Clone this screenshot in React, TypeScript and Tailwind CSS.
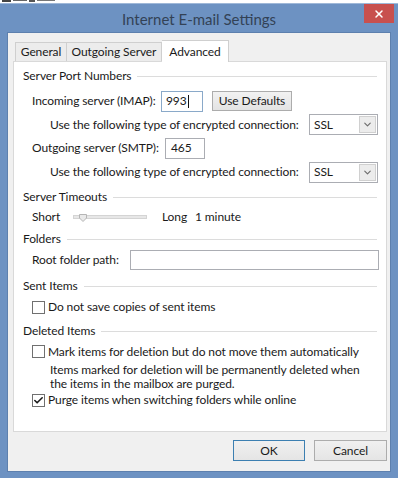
import { ChevronDown, X, Check } from "lucide-react";

function Section({ title, top }: { title: string; top: string }) {
  return (
    <div className={`flex h-[16px] items-center pl-[9px] pr-[9px] ${top}`}>
      <span className="whitespace-nowrap">{title}</span>
      <div className="ml-[6px] h-px flex-1 bg-[#dcdcdc]" />
    </div>
  );
}

function Select() {
  return (
    <div className="ml-auto flex h-[21px] w-[69px] items-center border border-[#abadb3] bg-white pl-[4px] pr-[1px]">
      <span className="flex-1">SSL</span>
      <div className="flex h-[17px] w-[17px] items-center justify-center border border-[#d0d0d0] bg-[#ececec]">
        <ChevronDown size={11} strokeWidth={2.5} className="text-[#6d6d6d]" />
      </div>
    </div>
  );
}

function CheckBox({ checked }: { checked?: boolean }) {
  return (
    <div className="flex h-[13px] w-[13px] items-center justify-center border border-[#707070] bg-white">
      {checked && <Check size={11} strokeWidth={3.5} className="text-[#1a1a1a]" />}
    </div>
  );
}

export default function App() {
  return (
    <div className="h-[478px] w-[398px] overflow-hidden bg-white font-['Lato',sans-serif] text-[12px] tracking-[-0.1px] text-[#1a1a1a]">
      {/* scraps of the window behind, cut by the edge */}
      <div className="flex h-[3px] items-start gap-[2px] pl-[2px]">
        <div className="h-[2px] w-[9px] bg-[#444]" />
        <div className="h-[1px] w-[14px] bg-[#666]" />
        <div className="h-[2px] w-[6px] bg-[#555]" />
        <div className="h-[1px] w-[18px] bg-[#777]" />
      </div>
      <div className="flex h-[475px] flex-col border-t border-[#9fb8d8] bg-[#6d92c2] px-[7px]">
        <div className="relative flex h-[28px] items-center justify-center">
          <span className="pt-[2px] text-[15px] tracking-normal text-[#334256]">Internet E-mail Settings</span>
          <div className="absolute -right-[3px] top-0 flex h-[19px] w-[30px] items-center justify-center bg-[#c8504e]">
            <X size={12} strokeWidth={3} className="text-white" />
          </div>
        </div>
        <div className="flex h-[440px] flex-col border border-[#5d80ae] bg-[#f0f0f0] pl-[5px] pr-[3px]">
          <div className="flex h-[28px] items-end pl-[2px]">
            <div className="flex h-[19px] w-[52px] items-center justify-center border border-b-0 border-[#cfcfcf] bg-[#ececec]">
              General
            </div>
            <div className="flex h-[19px] w-[95px] items-center justify-center border border-b-0 border-l-0 border-[#cfcfcf] bg-[#ececec]">
              Outgoing Server
            </div>
            <div className="relative z-10 -mb-px flex h-[22px] w-[67px] items-center justify-center border border-b-0 border-l-0 border-[#cfcfcf] bg-white">
              Advanced
            </div>
          </div>
          <div className="flex h-[371px] flex-col border border-[#d9d9d9] bg-white pt-[6px]">
            <Section title="Server Port Numbers" top="" />
            <div className="mt-[5px] flex h-[24px] items-center pl-[18px]">
              <span className="w-[129px]">Incoming server (IMAP):</span>
              <div className="flex h-[21px] w-[42px] items-center border border-[#8aa9c9] pl-[4px]">
                993<span className="ml-px h-[13px] w-px bg-[#111]" />
              </div>
              <div className="ml-[9px] flex h-[20px] w-[80px] items-center justify-center border border-[#acacac] bg-gradient-to-b from-[#f2f2f2] to-[#e3e3e3]">
                Use Defaults
              </div>
            </div>
            <div className="flex h-[23px] items-center pl-[36px] pr-[8px]">
              <span>Use the following type of encrypted connection:</span>
              <Select />
            </div>
            <div className="flex h-[24px] items-center pl-[18px]">
              <span className="w-[133px]">Outgoing server (SMTP):</span>
              <div className="flex h-[21px] w-[40px] items-center border border-[#abadb3] pl-[5px]">465</div>
            </div>
            <div className="flex h-[24px] items-center pl-[36px] pr-[8px]">
              <span>Use the following type of encrypted connection:</span>
              <Select />
            </div>
            <Section title="Server Timeouts" top="mt-[5px]" />
            <div className="flex h-[24px] items-center pl-[18px]">
              <span className="w-[41px]">Short</span>
              <div className="relative h-[4px] w-[74px] border border-[#d4d4d4] bg-[#e7e7e7]">
                <svg className="absolute -top-[2px] left-[5px]" width="8" height="8" viewBox="0 0 8 8">
                  <path d="M0.5 0.5H7.5V4L4 7.5L0.5 4Z" fill="#e9e9e9" stroke="#b5b5b5" />
                </svg>
              </div>
              <span className="ml-[15px] w-[33px]">Long</span>
              <span>1 minute</span>
            </div>
            <Section title="Folders" top="mt-[2px]" />
            <div className="mt-px flex h-[24px] items-center pl-[18px] pr-[7px]">
              <span className="w-[98px]">Root folder path:</span>
              <div className="h-[20px] flex-1 border border-[#abadb3]" />
            </div>
            <Section title="Sent Items" top="mt-[6px]" />
            <div className="mt-px flex h-[24px] items-center gap-[3px] pl-[18px]">
              <CheckBox />
              <span>Do not save copies of sent items</span>
            </div>
            <Section title="Deleted Items" top="mt-[4px]" />
            <div className="mt-px flex h-[23px] items-center gap-[3px] pl-[18px]">
              <CheckBox />
              <span>Mark items for deletion but do not move them automatically</span>
            </div>
            <div className="pl-[36px] leading-[14px]">
              Items marked for deletion will be permanently deleted when
              <br />
              the items in the mailbox are purged.
            </div>
            <div className="flex h-[18px] items-center gap-[3px] pl-[18px]">
              <CheckBox checked />
              <span>Purge items when switching folders while online</span>
            </div>
          </div>
          <div className="mt-[8px] flex justify-end gap-[9px]">
            <div className="flex h-[21px] w-[72px] items-center justify-center border border-[#3c7fb1] bg-gradient-to-b from-[#f0f0f0] to-[#e5e5e5]">
              OK
            </div>
            <div className="flex h-[21px] w-[73px] items-center justify-center border border-[#acacac] bg-gradient-to-b from-[#f0f0f0] to-[#e5e5e5]">
              Cancel
            </div>
          </div>
        </div>
      </div>
    </div>
  );
}
